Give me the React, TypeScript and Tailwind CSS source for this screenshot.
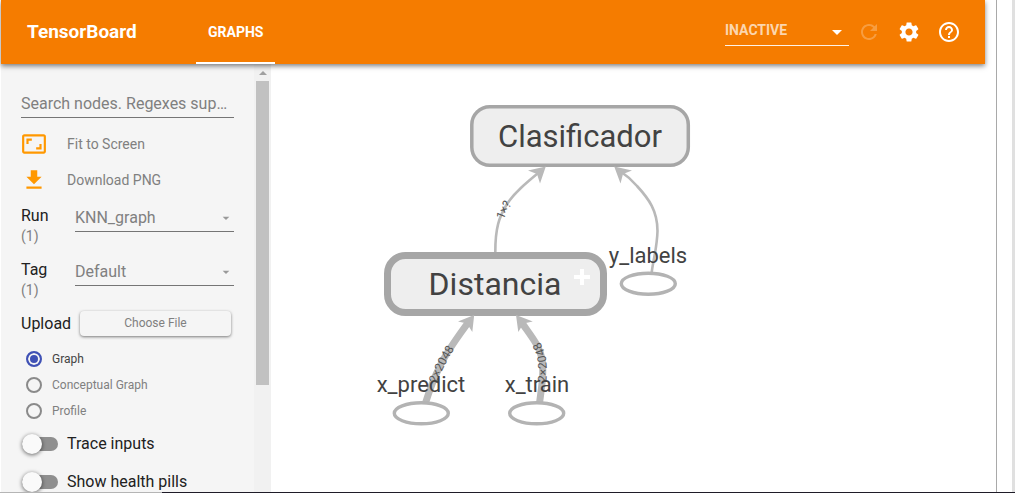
import { useState, type ReactNode } from "react";
import {
  MdArrowDropDown,
  MdAspectRatio,
  MdFileDownload,
  MdHelpOutline,
  MdRefresh,
  MdSettings,
} from "react-icons/md";

function Header() {
  return (
    <header className="relative z-10 flex h-16 shrink-0 items-center bg-[#f57c00] pr-6 pl-[26px] text-white shadow-[0_2px_5px_rgba(0,0,0,0.5)]">
      <h1 className="w-[109px] text-[19px] font-bold whitespace-nowrap">TensorBoard</h1>
      <nav className="ml-[60px] h-full">
        <a
          href="#graphs"
          className="flex h-full items-center border-b-2 border-white px-3 pt-0.5 text-sm font-bold"
        >
          GRAPHS
        </a>
      </nav>
      <div className="relative ml-auto w-[124px]">
        <select
          aria-label="Inactive dashboards"
          className="block h-7 w-full appearance-none border-b border-white/90 bg-transparent pb-1 text-sm font-bold text-white/70 outline-none"
        >
          <option>INACTIVE</option>
        </select>
        <MdArrowDropDown className="pointer-events-none absolute top-0.5 right-0 size-6" />
      </div>
      <div className="ml-2 flex gap-4">
        <button type="button" aria-label="Reload" disabled className="p-0 opacity-25">
          <MdRefresh className="size-6" />
        </button>
        <button type="button" aria-label="Settings">
          <MdSettings className="size-6" />
        </button>
        <a href="#help" aria-label="Help">
          <MdHelpOutline className="size-6" />
        </a>
      </div>
    </header>
  );
}

function IconAction({ icon, children }: { icon: ReactNode; children: ReactNode }) {
  return (
    <button type="button" className="flex h-9 w-full items-center gap-5 text-sm text-[#808080]">
      <span className="text-[#ff9800]">{icon}</span>
      {children}
    </button>
  );
}

function Picker({ id, label, value }: { id: string; label: string; value: string }) {
  return (
    <div className="flex h-[54px]">
      <div className="w-[54px] pt-2">
        <label htmlFor={id} className="block text-base leading-5 text-[#212121]">
          {label}
        </label>
        <div className="text-sm leading-5 text-[#808080]">(1)</div>
      </div>
      <div className="relative flex-1 pt-1">
        <select
          id={id}
          className="block h-[30px] w-full appearance-none border-b border-[#757575] bg-transparent pt-0.5 text-base text-[#808080] outline-none"
        >
          <option>{value}</option>
        </select>
        <MdArrowDropDown className="pointer-events-none absolute top-3 right-0 size-4 text-[#999999]" />
      </div>
    </div>
  );
}

function Toggle({ label }: { label: string }) {
  return (
    <label className="flex h-[38px] shrink-0 items-center gap-[9px] text-base text-[#212121]">
      <input
        type="checkbox"
        className="relative ml-px h-3.5 w-9 appearance-none rounded-full bg-[#8f8f8f] before:absolute before:-top-[3px] before:left-0 before:size-5 before:rounded-full before:bg-[#fafafa] before:shadow-[0_1px_4px_rgba(0,0,0,0.6)] checked:before:left-4"
      />
      {label}
    </label>
  );
}

const colorModes = ["Graph", "Conceptual Graph", "Profile"];

function Sidebar() {
  const [mode, setMode] = useState("Graph");
  return (
    <aside className="flex w-[270px] shrink-0 overflow-hidden bg-[#f5f5f5]">
      <div className="flex min-w-0 flex-1 flex-col overflow-hidden pt-[26px] pr-5 pl-5">
        <input
          type="text"
          aria-label="Search nodes"
          placeholder="Search nodes. Regexes supported."
          className="h-7 w-full shrink-0 border-b border-[#757575] bg-transparent text-base text-ellipsis outline-none placeholder:text-[#808080]"
        />
        <div className="mt-2 shrink-0">
          <IconAction icon={<MdAspectRatio className="size-[26px]" />}>Fit to Screen</IconAction>
          <IconAction icon={<MdFileDownload className="size-[26px]" />}>Download PNG</IconAction>
        </div>
        <div className="shrink-0">
          <Picker id="run" label="Run" value="KNN_graph" />
          <Picker id="tag" label="Tag" value="Default" />
        </div>
        <div className="flex h-[34px] shrink-0 items-center gap-2">
          <span id="upload" className="w-[51px] pt-px text-base text-[#212121]">
            Upload
          </span>
          <button
            type="button"
            aria-describedby="upload"
            className="h-[25px] w-[151px] rounded-sm text-xs text-[#808080] shadow-[0_1px_3px_rgba(0,0,0,0.5)]"
          >
            Choose File
          </button>
        </div>
        <fieldset className="mt-1.5 mb-px shrink-0 pl-[5px]">
          {colorModes.map((name) => (
            <label
              key={name}
              className="flex h-[26px] items-center gap-2.5 text-xs text-[#808080] has-checked:text-[#444444]"
            >
              <input
                type="radio"
                name="structure"
                checked={mode === name}
                onChange={() => setMode(name)}
                className="size-4 appearance-none rounded-full border-2 border-[#8a8a8a] checked:border-[#3f51b5] checked:bg-[#3f51b5] checked:shadow-[inset_0_0_0_2px_#f5f5f5]"
              />
              {name}
            </label>
          ))}
        </fieldset>
        <Toggle label="Trace inputs" />
        <Toggle label="Show health pills" />
      </div>
      <div className="flex w-[17px] shrink-0 flex-col items-center bg-[#f1f1f1]">
        <div className="flex h-[17px] items-center">
          <svg viewBox="0 0 8 4" className="h-1 w-2 fill-[#a0a0a0]" aria-hidden="true">
            <path d="M4 0 8 4H0Z" />
          </svg>
        </div>
        <div className="h-[71%] w-[13px] bg-[#c1c1c1]" />
      </div>
    </aside>
  );
}

function OpNode({ cx, cy }: { cx: number; cy: number }) {
  return <ellipse cx={cx} cy={cy} rx="27" ry="10.5" fill="#fff" stroke="#b3b3b3" strokeWidth="3.4" />;
}

function Graph() {
  return (
    <main className="min-w-0 flex-1 overflow-hidden bg-white">
      <svg
        className="block h-full w-full font-[Roboto,sans-serif]"
        role="img"
        aria-label="Computation graph"
      >
        <g transform="translate(-271 -64)">
          <rect x="471.8" y="106.8" width="216.5" height="58.5" rx="18" fill="#eeeeee" stroke="#a6a6a6" strokeWidth="3.5" />
          <rect x="387.5" y="255.5" width="216" height="57" rx="18" fill="#eeeeee" stroke="#a6a6a6" strokeWidth="7" />
          <path d="M574 277H590M582 269V285" stroke="#fff" strokeWidth="4" />
          <g fill="none" stroke="#b9b9b9">
            <path id="edge-dist" strokeWidth="2.6" d="M495.3 252C495.3 228 499 217 507 204C514 193 526 183 540 171.5" />
            <path strokeWidth="2.6" d="M651.5 274C653 260 657 249 657.5 231C657.5 211 649 199 637 186C631 179 626 175 620 171" />
            <path id="edge-predict" strokeWidth="7" d="M425.5 403C428 395 432 382 440 366C447 351 457 338 470 320" />
            <path id="edge-train" strokeWidth="7" d="M539.5 403C542 385 544 371 542 359C539.5 345 530 335 520 320" />
          </g>
          <g fill="#b9b9b9">
            <path d="M545.8 166.5 528 170.5 537 174 540 183.5Z" />
            <path d="M614.2 166.5 632 170.5 623 174 620.5 183.5Z" />
            <path d="M474.2 315 458 321.5 467 323.5 472.3 332Z" />
            <path d="M516 315 532.8 321.5 523.5 323.5 518.3 332Z" />
          </g>
          <g fill="#555555" fontSize="12">
            <text dy="4">
              <textPath href="#edge-dist" startOffset="34">1×?</textPath>
            </text>
            <text dy="4">
              <textPath href="#edge-predict" startOffset="22">2×2048</textPath>
            </text>
            <text dy="4">
              <textPath href="#edge-train" startOffset="21">2×2048</textPath>
            </text>
          </g>
          <OpNode cx={648.3} cy={283.7} />
          <OpNode cx={421.3} cy={413.3} />
          <OpNode cx={536.7} cy={413.3} />
          <g fill="#424242" textAnchor="middle">
            <text x="580" y="147" fontSize="31">Clasificador</text>
            <text x="495" y="295" fontSize="32">Distancia</text>
            <g fontSize="22">
              <text x="648" y="263">y_labels</text>
              <text x="421" y="392">x_predict</text>
              <text x="537" y="392">x_train</text>
            </g>
          </g>
        </g>
      </svg>
    </main>
  );
}

export default function App() {
  return (
    <div className="flex h-screen flex-col overflow-hidden bg-white font-[Roboto,sans-serif]">
      <div className="flex min-h-0 flex-1">
        <div className="flex min-w-0 flex-1 flex-col pl-px">
          <Header />
          <div className="flex min-h-0 flex-1">
            <Sidebar />
            <Graph />
          </div>
        </div>
        <div className="w-3 shrink-0 border-r border-[#a9a9a9] bg-white" />
        <div className="w-[18px] shrink-0 border-r-[3px] border-[#e0e0e0]" />
      </div>
      <div className="flex h-px shrink-0 bg-[#1f1c28]">
        <div className="w-[162px] bg-[#b5b5b5]" />
      </div>
    </div>
  );
}
